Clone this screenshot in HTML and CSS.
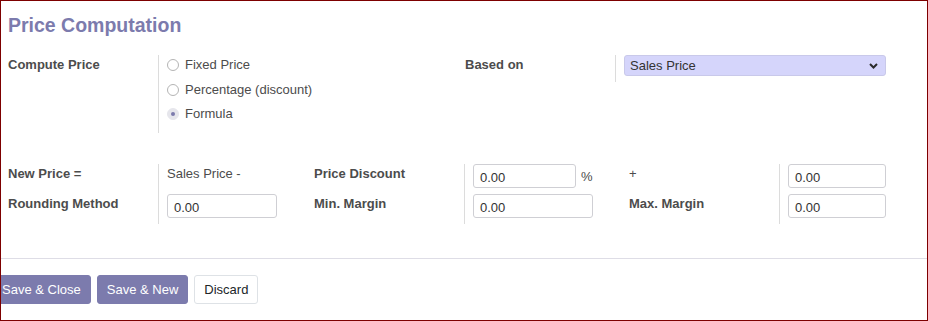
FILE: index.html
```html
<!DOCTYPE html>
<html>
<head>
<meta charset="utf-8">
<link rel="stylesheet" href="styles.css">
</head>
<body>
<div class="frame">
  <h1 class="title">Price Computation</h1>

  <div class="group group-top">
    <div class="label">Compute Price</div>
    <div class="field radios">
      <div class="radio"><span class="dot"></span><span>Fixed Price</span></div>
      <div class="radio"><span class="dot"></span><span>Percentage (discount)</span></div>
      <div class="radio"><span class="dot checked"></span><span>Formula</span></div>
    </div>
    <div class="label">Based on</div>
    <div class="field">
      <div class="select">
        <span>Sales Price</span>
        <svg class="chev" width="9" height="6" viewBox="0 0 9 6"><path d="M1 1 L4.5 4.5 L8 1" fill="none" stroke="#2b2b2b" stroke-width="2"/></svg>
      </div>
    </div>
  </div>

  <div class="group group-formula">
    <div class="label">New Price =</div>
    <div class="field sep"><span class="plain">Sales Price -</span></div>
    <div class="label">Price Discount</div>
    <div class="field sep"><span class="input w103">0.00</span><span class="unit">%</span></div>
    <div class="label plus">+</div>
    <div class="field sep"><span class="input w98">0.00</span></div>

    <div class="label">Rounding Method</div>
    <div class="field sep"><span class="input w110">0.00</span></div>
    <div class="label">Min. Margin</div>
    <div class="field sep"><span class="input w120">0.00</span></div>
    <div class="label">Max. Margin</div>
    <div class="field sep"><span class="input w98">0.00</span></div>
  </div>

  <div class="footer">
    <button class="btn primary first">Save &amp; Close</button>
    <button class="btn primary">Save &amp; New</button>
    <button class="btn secondary">Discard</button>
  </div>
</div>
</body>
</html>
```

FILE: styles.css
```css
html, body {
  margin: 0;
  padding: 0;
  background: #ffffff;
}

body {
  font-family: "Liberation Sans", Arial, sans-serif;
  font-size: 13px;
  line-height: 19.5px;
  color: #4c4c4c;
}

.frame {
  box-sizing: border-box;
  width: 928px;
  height: 321px;
  border: 1px solid #7d0000;
  overflow: hidden;
  padding-top: 12px;
}

.title {
  margin: 0;
  padding-left: 7px;
  font-size: 19.5px;
  line-height: 24px;
  font-weight: 700;
  color: #7c7bad;
}

.group {
  display: grid;
  padding-left: 7px;
}

.group-top {
  margin-top: 18px;
  grid-template-columns: 150px 307px 150px 271px;
  align-items: start;
}

.group-formula {
  margin-top: 31px;
  grid-template-columns: 150px 156px 150px 165px 150px 107px;
  grid-auto-rows: 30px;
}

.label {
  font-weight: 700;
  color: #4c4c4c;
}

.plus {
  font-weight: 400;
}

.field {
  border-left: 1px solid #dcdcdc;
  padding-left: 8px;
}

.group-top .field:nth-child(4) {
  height: 27px;
}

.radios {
  height: 78px;
  box-sizing: border-box;
}

.radio {
  display: flex;
  align-items: center;
  height: 19.5px;
  margin-bottom: 5px;
}

.dot {
  box-sizing: border-box;
  width: 12px;
  height: 12px;
  border-radius: 50%;
  border: 1px solid #b4b4b4;
  background: #fff;
  margin-right: 6px;
  margin-top: 1px;
  position: relative;
}

.dot.checked {
  border-color: #e6e6ec;
  background: #e6e6ec;
}

.dot.checked::after {
  content: "";
  position: absolute;
  left: 3px;
  top: 3px;
  width: 4px;
  height: 4px;
  border-radius: 50%;
  background: #7c7bad;
}

.select {
  box-sizing: border-box;
  width: 262px;
  height: 21px;
  background: #d5d5fb;
  border: 1px solid #c9c9ea;
  border-radius: 3px;
  display: flex;
  align-items: center;
  justify-content: space-between;
  padding: 0 7px 0 5px;
  color: #333;
  line-height: 19px;
}

.chev {
  display: block;
}

.plain {
  color: #4c4c4c;
}

.input {
  display: inline-block;
  box-sizing: border-box;
  height: 24px;
  border: 1px solid #cfcfd4;
  border-radius: 3px;
  padding: 3px 6px 0;
  line-height: 19px;
  color: #333;
  background: #fff;
  vertical-align: top;
}

.w98 { width: 98px; }
.w103 { width: 103px; }
.w110 { width: 110px; }
.w120 { width: 120px; }

.unit {
  display: inline-block;
  margin-left: 5px;
  padding-top: 3px;
  line-height: 19px;
  vertical-align: top;
  color: #4c4c4c;
}

.footer {
  margin-top: 34px;
  border-top: 1px solid #dedde6;
  padding-top: 16px;
  display: flex;
  gap: 6px;
}

.btn {
  box-sizing: border-box;
  height: 29px;
  padding: 0 9px;
  border: 1px solid transparent;
  border-radius: 3px;
  font-family: "Liberation Sans", Arial, sans-serif;
  font-size: 13px;
  line-height: 27px;
  cursor: pointer;
}

.btn.first {
  margin-left: -9px;
}

.primary {
  background: #7c7bad;
  border-color: #7c7bad;
  color: #ffffff;
}

.secondary {
  background: #ffffff;
  border-color: #dee2e6;
  color: #212529;
}
```
